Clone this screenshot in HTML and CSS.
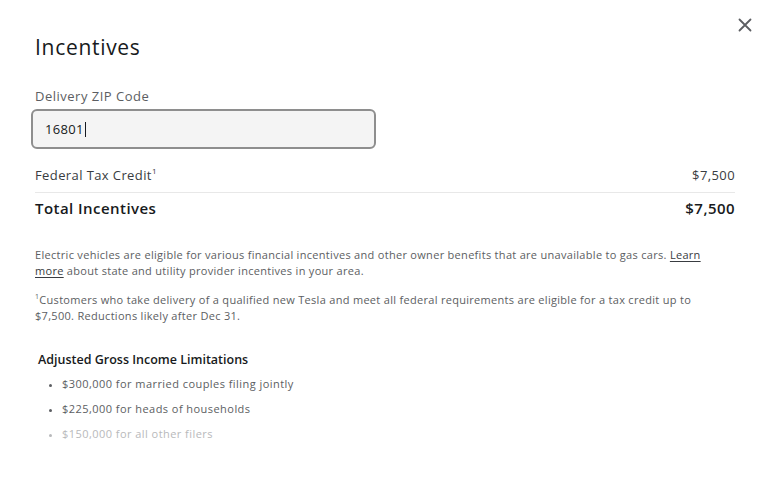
FILE: index.html
```html
<!DOCTYPE html>
<html lang="en">
<head>
<meta charset="utf-8">
<title>Incentives</title>
<link rel="stylesheet" href="styles.css">
</head>
<body>
<div class="modal">
  <button class="close" aria-label="Close">
    <svg viewBox="0 0 14 14" width="14" height="14"><path d="M1.5 1.5 L12.5 12.5 M12.5 1.5 L1.5 12.5" stroke="#5c5e62" stroke-width="1.8" fill="none" stroke-linecap="round"/></svg>
  </button>
  <h1 class="title">Incentives</h1>
  <label class="field-label">Delivery ZIP Code</label>
  <div class="input">16801<span class="caret"></span></div>
  <div class="row">
    <span>Federal Tax Credit<sup>1</sup></span>
    <span>$7,500</span>
  </div>
  <div class="row total">
    <span>Total Incentives</span>
    <span>$7,500</span>
  </div>
  <p class="note">Electric vehicles are eligible for various financial incentives and other owner benefits that are unavailable to gas cars. <a href="#">Learn</a> <a href="#">more</a> about state and utility provider incentives in your area.</p>
  <p class="note foot"><sup>1</sup>Customers who take delivery of a qualified new Tesla and meet all federal requirements are eligible for a tax credit up to $7,500. Reductions likely after Dec 31.</p>
  <h2 class="sub">Adjusted Gross Income Limitations</h2>
  <ul class="list">
    <li>$300,000 for married couples filing jointly</li>
    <li>$225,000 for heads of households</li>
    <li class="faded">$150,000 for all other filers</li>
  </ul>
</div>
</body>
</html>
```
FILE: styles.css
```css
html, body {
  margin: 0;
  background: #fff;
}
body {
  font-family: "Open Sans", "Liberation Sans", sans-serif;
  color: #171a20;
}
.modal {
  position: relative;
  padding: 32px 33px 0 35px;
}
.close {
  position: absolute;
  top: 18px;
  right: 16px;
  background: none;
  border: 0;
  padding: 0;
  width: 14px;
  height: 14px;
  display: flex;
}
.title {
  margin: 0;
  font-size: 21px;
  font-weight: 400;
  line-height: 30px;
  letter-spacing: 0.7px;
  color: #171a20;
}
.field-label {
  display: block;
  margin-top: 25px;
  font-size: 13px;
  line-height: 18px;
  letter-spacing: 0.5px;
  color: #5c5e62;
}
.input {
  margin: 4px 0 0 -4px;
  width: 329px;
  height: 36px;
  box-sizing: content-box;
  border: 2px solid #8e8e8e;
  border-radius: 6px;
  background: #f4f4f4;
  display: flex;
  align-items: center;
  padding-left: 12px;
  font-size: 13px;
  letter-spacing: 0.3px;
  color: #171a20;
}
.caret {
  display: inline-block;
  width: 1px;
  height: 15px;
  background: #171a20;
  margin-left: 1px;
}
.row {
  display: flex;
  justify-content: space-between;
  align-items: center;
  font-size: 13px;
  letter-spacing: 0.4px;
  color: #393c41;
  margin-top: 17px;
  padding-bottom: 8px;
  border-bottom: 1px solid #e8e8e8;
}
.row sup {
  font-size: 8px;
  vertical-align: 6px;
  line-height: 0;
}
.row.total {
  margin-top: 5px;
  padding-bottom: 0;
  border-bottom: 0;
  font-size: 15px;
  font-weight: 600;
  letter-spacing: 0.45px;
  color: #171a20;
}
.note {
  margin: 29px 0 0;
  max-width: 690px;
  font-size: 11px;
  line-height: 16px;
  letter-spacing: 0.3px;
  color: #5c5e62;
}
.note a {
  color: #393c41;
  text-decoration: underline;
  text-underline-offset: 2px;
}
.note.foot {
  margin-top: 13px;
  max-width: 672px;
}
.note sup {
  font-size: 7px;
  vertical-align: 5px;
  line-height: 0;
}
.sub {
  margin: 27px 0 0 3px;
  font-size: 12.5px;
  font-weight: 600;
  line-height: 18px;
  letter-spacing: 0;
  color: #171a20;
}
.list {
  margin: 7px 0 0 3px;
  padding: 0 0 0 24px;
  font-size: 11px;
  line-height: 16px;
  letter-spacing: 0.45px;
  color: #5c5e62;
}
.list li {
  margin-bottom: 9px;
}
.list li::marker {
  font-size: 9px;
}
.list .faded {
  color: #b8b9bb;
}
```
